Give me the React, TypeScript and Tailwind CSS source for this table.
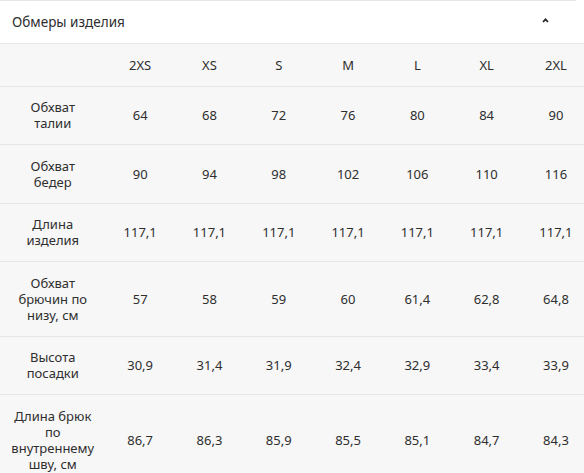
// SizeTable — collapsible "Обмеры изделия" block with a size grid.
const sizes = ['2XS', 'XS', 'S', 'M', 'L', 'XL', '2XL'];

const rows: { label: string[]; values: string[] }[] = [
  { label: ['Обхват', 'талии'], values: ['64', '68', '72', '76', '80', '84', '90'] },
  { label: ['Обхват', 'бедер'], values: ['90', '94', '98', '102', '106', '110', '116'] },
  { label: ['Длина', 'изделия'], values: ['117,1', '117,1', '117,1', '117,1', '117,1', '117,1', '117,1'] },
  { label: ['Обхват', 'брючин по', 'низу, см'], values: ['57', '58', '59', '60', '61,4', '62,8', '64,8'] },
  { label: ['Высота', 'посадки'], values: ['30,9', '31,4', '31,9', '32,4', '32,9', '33,4', '33,9'] },
  {
    label: ['Длина брюк', 'по', 'внутреннему', 'шву, см'],
    values: ['86,7', '86,3', '85,9', '85,5', '85,1', '84,7', '84,3'],
  },
];

const gridCols = 'grid grid-cols-[105.5px_repeat(7,69.3px)]';

export default function App() {
  return (
    <div className="w-[584px] h-[473px] overflow-hidden bg-white text-[#2e2e2e] font-['Noto_Sans',sans-serif]">
      <div className="w-[576px] border-t border-[#e6e6e6]" />
      <div className="flex items-center justify-between h-[43px] pl-3 pr-[35px] border-b border-[#e8e8e8]">
        <span className="text-[13.5px]">Обмеры изделия</span>
        <svg width="7" height="5" viewBox="0 0 7 5" className="mb-[3px]">
          <path d="M1 4 L3.5 1.3 L6 4" fill="none" stroke="#222" strokeWidth="1.7" />
        </svg>
      </div>
      <div className="bg-[#f7f7f7] text-[13px] leading-4">
        <div className={`${gridCols} border-b border-[#e6e6e6]`}>
          <div className="py-[12.75px]" />
          {sizes.map((s) => (
            <div key={s} className="py-[12.75px] text-center">
              {s}
            </div>
          ))}
        </div>
        {rows.map((r) => (
          <div key={r.label.join(' ')} className={`${gridCols} border-b border-[#e6e6e6]`}>
            <div className="py-[12.75px] flex flex-col items-center justify-center text-center">
              {r.label.map((l) => (
                <span key={l}>{l}</span>
              ))}
            </div>
            {r.values.map((v, i) => (
              <div key={i} className="py-[12.75px] flex items-center justify-center">
                {v}
              </div>
            ))}
          </div>
        ))}
      </div>
    </div>
  );
}
